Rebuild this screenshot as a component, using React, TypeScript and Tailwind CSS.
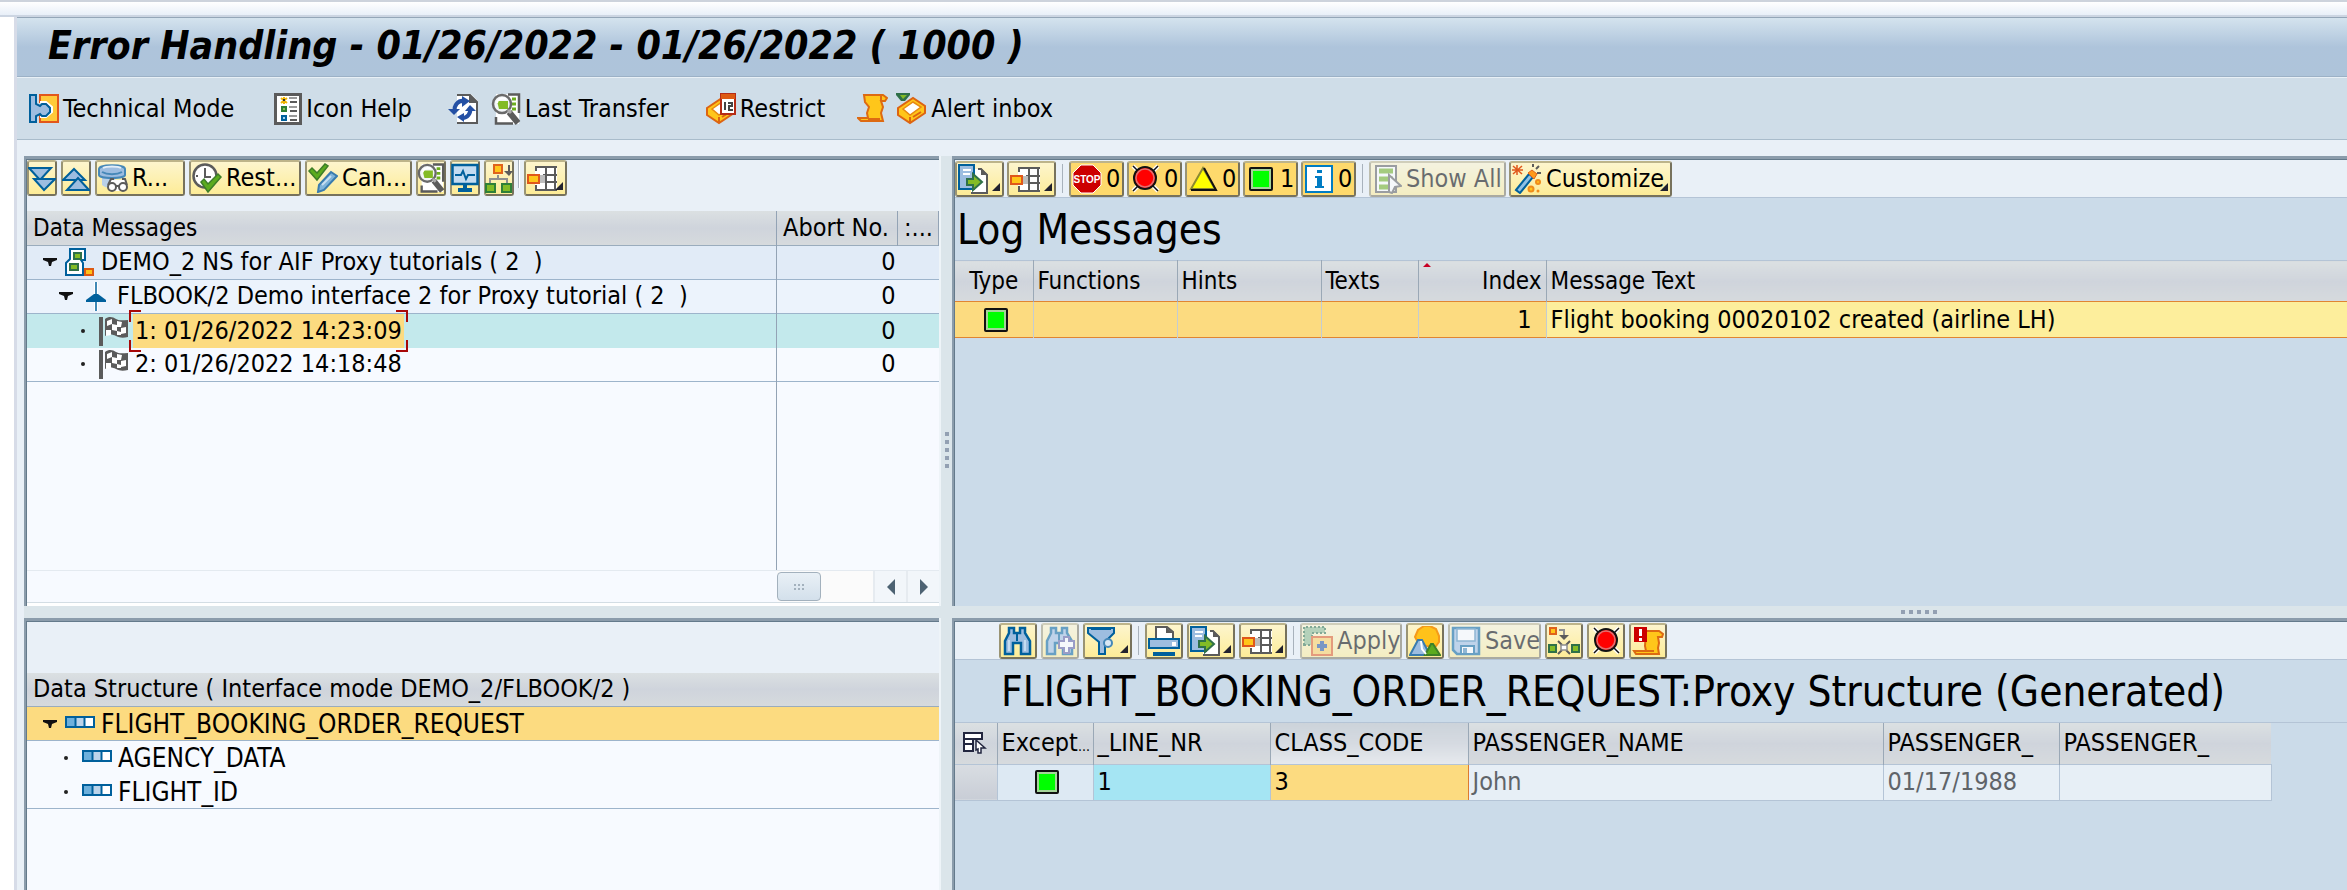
import React from 'react';
import type { ReactNode } from 'react';

/* ---------- icons ---------- */

type IconProps = { children: ReactNode; className?: string; box?: string };

function Icon({ children, className = 'size-[30px]', box = '0 0 30 30' }: IconProps) {
  return (
    <svg viewBox={box} className={`shrink-0 ${className}`} fill="none" aria-hidden="true">
      {children}
    </svg>
  );
}

const TechnicalIcon = () => (
  <Icon>
    <path d="M11 1h18v27H11v-6h5l5-4V12l-5-4h-5z" fill="#ffca3a" stroke="#e2571b" strokeWidth="2" />
    <path d="M11 8h6l6 5v5l-6 5h-6" stroke="#fff" strokeWidth="2" />
    <path d="M1 1h6v9l4 2 2-2h4l4 4v4l-4 4h-4l-2-2-4 2v6H1z" fill="#9dbde0" stroke="#00609c" strokeWidth="2" />
  </Icon>
);

const LegendIcon = () => (
  <Icon className="h-[32px] w-[28px]" box="0 0 28 32">
    <rect x="1.5" y="1.5" width="25" height="29" fill="#fff" stroke="#5b5b5b" strokeWidth="3" />
    <path d="M7 5l6 5M13 5l-6 5M10 4v7" stroke="#f0b400" strokeWidth="2" />
    <path d="M9 6h2v2H9z" fill="#333" />
    <path d="M8 14h4v4H8z" fill="#8cc152" stroke="#2f7d32" strokeWidth="2" />
    <path d="M8 23h4v4H8z" fill="#a6d2ef" stroke="#00609c" strokeWidth="2" />
    <path d="M15 5h8M15 14h8M15 23h8" stroke="#9a9a9a" strokeWidth="2" />
    <path d="M16 9h7M16 18h7M16 27h7" stroke="#5b5b5b" strokeWidth="2" />
  </Icon>
);

const RefreshIcon = () => (
  <Icon className="h-[32px] w-[31px]" box="0 0 31 32">
    <path d="M9 1h14l7 7v23H9z" fill="#fff" />
    <path d="M9 2h13l7 7v21H9" stroke="#5b5b5b" strokeWidth="2" />
    <path d="M21 1l9 9h-9z" fill="#5b5b5b" />
    <path d="M7 18a8 8 0 0 1 9-10" stroke="#2450a4" strokeWidth="4" />
    <path d="M14 3l8 5-8 6z" fill="#2450a4" />
    <path d="M0 16h12l-6 6z" fill="#2450a4" />
    <path d="M22 15a8 8 0 0 1-8 10" stroke="#2450a4" strokeWidth="4" />
    <path d="M17 18h11l-6-6z" fill="#2450a4" />
    <path d="M16 20v9l-7-5z" fill="#2450a4" />
  </Icon>
);

const SearchPageIcon = ({ className }: { className?: string }) => (
  <Icon className={className ?? 'h-[32px] w-[30px]'} box="0 0 30 32">
    <path d="M5 1h23v30H5z" fill="#fff" />
    <path d="M17 1.5h11V20M5 24v6.500h17" stroke="#5b5b5b" strokeWidth="2.500" />
    <path d="M21 6h4M21 11h4M21 16h4" stroke="#6cae1e" strokeWidth="3" />
    <circle cx="11" cy="11" r="9" fill="#f3f6f8" stroke="#6a6a6a" strokeWidth="2.500" />
    <path d="M6 8h11v8H8z" fill="#83bb26" />
    <path d="M6 10a6 5 0 0 1 9-4" stroke="#fff" strokeWidth="2" />
    <path d="M18 19l9 11" stroke="#5b5b5b" strokeWidth="6" />
    <path d="M17 17l3 3" stroke="#aaa" strokeWidth="3" />
  </Icon>
);

const Tray = () => (
  <>
    <path d="M2 15L17 5l12 8v7L14 30 2 22z" fill="#ffc61a" stroke="#dd6412" strokeWidth="2" />
    <path d="M7 16l10-7 8 5-11 8z" fill="#fff" stroke="#e88a12" strokeWidth="1.500" />
    <path d="M14 24v6M17 24l8-5" stroke="#dd6412" strokeWidth="2" />
  </>
);

const RestrictIcon = () => (
  <Icon className="h-[32px] w-[31px]" box="0 0 31 32">
    <Tray />
    <rect x="16" y="1" width="14" height="20" fill="#fff" stroke="#b52c16" strokeWidth="2" />
    <path d="M16 1h14v5H16z" fill="#dd5a12" />
    <path d="M20 9v8M23 10h4v3h-3v4h4" stroke="#444" strokeWidth="2" />
  </Icon>
);

const ScrollIcon = () => (
  <Icon className="h-[31px] w-[31px]" box="0 0 31 31">
    <path
      d="M7 2h19l4 3-2 3h-4l2 6-2 6 2 8H4l-3-3h10l-1-5 2-6-4-5z"
      fill="#ffc61a"
      stroke="#dd6a12"
      strokeWidth="2"
    />
    <path d="M11 26h12M24 3v5" stroke="#dd6a12" strokeWidth="2" />
  </Icon>
);

const AlertInboxIcon = () => (
  <Icon className="h-[32px] w-[31px]" box="0 0 31 32">
    <Tray />
    <path d="M0 0h14v2l-5 6H5L0 2z" fill="#2f7048" />
    <path d="M4 2h7L7 6z" fill="#83bb26" />
  </Icon>
);

const ExpandDownIcon = () => (
  <Icon className="h-[30px] w-[28px]" box="1 0 28 30">
    <path d="M2 5h22L13 17z" fill="#9dbde0" stroke="#00609c" strokeWidth="2" />
    <path d="M7 16h21L17 27z" fill="#9dbde0" stroke="#00609c" strokeWidth="2" />
  </Icon>
);

const CollapseUpIcon = () => (
  <Icon className="h-[30px] w-[28px]" box="1 0 28 30">
    <path d="M2 17h22L13 6z" fill="#9dbde0" stroke="#00609c" strokeWidth="2" />
    <path d="M6 27h22L17 15z" fill="#9dbde0" stroke="#00609c" strokeWidth="2" />
  </Icon>
);

const DatabaseReadIcon = () => (
  <Icon>
    <path d="M4 12v10c2 2 5 3 9 3h4V12z" fill="#b9d0e8" />
    <path d="M1 6C1 1 27 1 27 6v6c0 4-26 4-26 0z" fill="#9dbde0" stroke="#4688b8" strokeWidth="2" />
    <path d="M5 5c3-2 15-2 18 0" stroke="#e3eef8" strokeWidth="2" />
    <path d="M4 9c5 3 15 3 20 0" stroke="#4688b8" strokeWidth="2" />
    <path d="M12 17h16v11H11z" fill="#fff" />
    <circle cx="14" cy="24" r="4" fill="#fff" stroke="#5b5b5b" strokeWidth="2" />
    <circle cx="25" cy="24" r="4" fill="#fff" stroke="#5b5b5b" strokeWidth="2" />
    <path d="M10 22l3-6h3M29 22l-2-6h-3M18 23h3" stroke="#5b5b5b" strokeWidth="2" />
  </Icon>
);

const RestartIcon = () => (
  <Icon>
    <circle cx="13" cy="13" r="11.500" fill="#fff" stroke="#5b5b5b" strokeWidth="2.500" />
    <path d="M13 5v9h6" stroke="#5b5b5b" strokeWidth="2" />
    <path d="M4 13h2M13 23v-2" stroke="#5b5b5b" strokeWidth="2" />
    <path d="M9 19l3-3 4 5 10-10 3 3-13 15z" fill="#5cab1e" stroke="#3d7d28" strokeWidth="1.500" />
  </Icon>
);

const CancelIcon = () => (
  <Icon>
    <path d="M1 8l3-3 5 5L17 1l3 2L9 17z" fill="#5cab1e" stroke="#3d7d28" strokeWidth="1.500" />
    <path d="M11 22L23 9l6 4-13 14-6 2z" fill="#7fb4da" stroke="#3a7cae" strokeWidth="2" />
    <path d="M14 22l9-9" stroke="#c7def0" strokeWidth="2" />
  </Icon>
);

const MonitorIcon = () => (
  <Icon className="h-[30px] w-[28px]" box="1 0 28 30">
    <rect x="2.500" y="2" width="25" height="19" fill="#c4dcf1" stroke="#00609c" strokeWidth="2.500" />
    <path d="M5 12h6l2-4 3 8 2-4h7" stroke="#00609c" strokeWidth="2" />
    <path d="M13 22h4v3h5v4H8v-4h5z" fill="#00609c" />
  </Icon>
);

const HierarchyIcon = () => (
  <Icon className="h-[30px] w-[28px]" box="1 0 28 30">
    <rect x="10" y="2" width="8" height="8" fill="#ffc61a" stroke="#e0631b" strokeWidth="2" />
    <path d="M14 12v4M6 21v-5h17v5" stroke="#8f8f8f" strokeWidth="2" />
    <path d="M25 2v8" stroke="#5b5b5b" strokeWidth="2" />
    <path d="M20 8h9l-4 5z" fill="#5b5b5b" />
    <rect x="2" y="21" width="9" height="8" fill="#83bb26" stroke="#2f8038" strokeWidth="2" />
    <rect x="18" y="21" width="9" height="8" fill="#83bb26" stroke="#2f8038" strokeWidth="2" />
  </Icon>
);

const LayoutIcon = () => (
  <Icon className="h-[30px] w-[32px]" box="1 0 32 30">
    <path d="M9 3h22v24H9z" fill="#fff" />
    <path d="M9 4h22M17 12h14M17 19h14M9 27h22M20 3v25M29 3v25" stroke="#5b5b5b" strokeWidth="2" />
    <path d="M10 4v4M10 22v5" stroke="#5b5b5b" strokeWidth="2" />
    <path d="M13 12h6v8h-6z" fill="#bdbdbd" />
    <rect x="2" y="12" width="11" height="8" fill="#ffc61a" stroke="#e0571b" strokeWidth="2" />
  </Icon>
);

const ExportIcon = () => (
  <Icon className="h-[30px] w-[32px]" box="0 0 32 30">
    <path d="M14 5h8l7 7v17H13z" fill="#fff" />
    <path d="M20 5h3l6 6v18H13" stroke="#5b5b5b" strokeWidth="2" />
    <path d="M23 4v7h7z" fill="#5b5b5b" />
    <path d="M1 1h15v24H1z" fill="#9dbde0" stroke="#00609c" strokeWidth="2" />
    <path d="M5 6h8M5 10h7" stroke="#fff" strokeWidth="2" />
    <path d="M9 15h6v-5l9 8-9 8v-5H9z" fill="#83bb26" stroke="#2f7048" strokeWidth="2" />
  </Icon>
);

const StopIcon = () => (
  <Icon>
    <path d="M9 1h12l8 8v12l-8 8H9l-8-8V9z" fill="#cc0000" stroke="#fff" strokeWidth="1" />
    <text x="15" y="19" textAnchor="middle" fontSize="10" fontWeight="700" fontFamily="Liberation Sans, sans-serif" fill="#fff">
      STOP
    </text>
  </Icon>
);

const AlarmIcon = () => (
  <Icon>
    <path d="M3 2l25 25M28 2L3 27" stroke="#fff" strokeWidth="4" />
    <path d="M3 2l25 25M28 2L3 27" stroke="#111" strokeWidth="1.500" />
    <circle cx="15" cy="14" r="11" fill="#ff0000" stroke="#111" strokeWidth="2" />
    <circle cx="15" cy="14" r="9" stroke="#e07070" strokeWidth="1.500" />
  </Icon>
);

const WarningIcon = () => (
  <Icon>
    <path d="M15 4L27 25H3z" fill="#ffff00" stroke="#8c8a30" strokeWidth="2" />
    <path d="M3 26h25L16 4" stroke="#111" strokeWidth="2" />
  </Icon>
);

const GreenIcon = () => (
  <svg viewBox="0 0 24 24" className="size-6 shrink-0" fill="none" role="img" aria-label="Success">
    <rect x="1" y="1" width="22" height="22" rx="1" fill="#a5d59a" stroke="#111" strokeWidth="2" />
    <rect x="4" y="4" width="16" height="16" fill="#00ff00" />
  </svg>
);

const InfoIcon = () => (
  <Icon>
    <rect x="2" y="2" width="26" height="26" fill="#fff" stroke="#007cc3" strokeWidth="2" />
    <path d="M13 6h5v3h-5zM11 12h7v10h2v2h-9v-2h2v-8h-2z" fill="#007cc3" />
  </Icon>
);

const ShowAllIcon = () => (
  <Icon>
    <path d="M4 2h20v26H4z" fill="#fff" stroke="#5b5b5b" strokeWidth="2" />
    <path d="M7 7h14M7 15h14M7 23h14" stroke="#6cae1e" strokeWidth="5" />
    <path d="M17 11l12 11-6 1-3 6-3-1z" fill="#fff" stroke="#5b5b5b" strokeWidth="2" />
  </Icon>
);

const WandIcon = () => (
  <Icon>
    <path d="M4 26L17 10l4 3L8 29z" fill="#8fc0e4" stroke="#00609c" strokeWidth="2" />
    <path d="M16 9l4-3 5 4-3 5z" fill="#ff9a1a" stroke="#e0631b" strokeWidth="1" />
    <path d="M5 1v10M1 2l9 8M10 2L1 10M0 6h11" stroke="#e0571b" strokeWidth="1.500" />
    <path d="M21 0v3M27 2l-3 3M25 9h4" stroke="#5b5b5b" strokeWidth="2" />
    <circle cx="26" cy="18" r="2" fill="#ffc61a" stroke="#f08c1a" strokeWidth="2" />
    <circle cx="19" cy="25" r="2.500" fill="#ffc61a" stroke="#f08c1a" strokeWidth="2" />
    <circle cx="26" cy="27" r="1.500" fill="#f08c1a" />
  </Icon>
);

const Binoculars = () => (
  <>
    <path
      d="M6 2h5v5h6V2h5v5l5 8v13h-9V17h-8v11H2V15l4-8z"
      fill="#9dbde0"
      stroke="#00609c"
      strokeWidth="2.500"
    />
    <path d="M14 8v7" stroke="#00609c" strokeWidth="2" />
  </>
);

const FindIcon = () => (
  <Icon>
    <Binoculars />
    <path d="M6 14v11M22 14v11" stroke="#c4dcf1" strokeWidth="2" />
  </Icon>
);

const FindNextIcon = () => (
  <Icon>
    <Binoculars />
    <path d="M19 11h5v4h5v7h-5v5h-5v-5h-5v-7h5z" fill="#fff" stroke="#5b5ba0" strokeWidth="2" />
  </Icon>
);

const FilterIcon = () => (
  <Icon>
    <path d="M2 2h26v5l-9 9v12h-6V16L2 7z" fill="#9dbde0" stroke="#00609c" strokeWidth="2" />
    <path d="M5 3h20v1H5z" fill="#00609c" />
    <circle cx="22" cy="17" r="4" fill="#d9e8f4" stroke="#4688b8" strokeWidth="2" />
  </Icon>
);

const PrintIcon = () => (
  <Icon className="h-[30px] w-[32px]" box="0 0 32 30">
    <path d="M8 1h11l6 5v7H8z" fill="#fff" stroke="#5b5b5b" strokeWidth="2" />
    <path d="M18 1l7 6h-7z" fill="#5b5b5b" />
    <rect x="1" y="13" width="30" height="9" fill="#9dbde0" stroke="#00609c" strokeWidth="2" />
    <path d="M24 16h4v4h-4z" fill="#fff" />
    <path d="M5 26h22v4H5z" fill="#00609c" />
  </Icon>
);

const ApplyIcon = () => (
  <Icon>
    <path d="M1 19V1h21v6H9v12z" fill="#8ab88a" stroke="#2f7048" strokeWidth="2" strokeDasharray="2 2" />
    <rect x="9" y="11" width="20" height="18" fill="#ffce5a" stroke="#e0571b" strokeWidth="2" />
    <path d="M19 15v10M14 20h10" stroke="#1f4e9c" strokeWidth="4" />
  </Icon>
);

const MountainIcon = () => (
  <Icon className="h-[30px] w-[32px]" box="0 0 32 30">
    <path d="M6 11l3-7 6-4h6l6 3 3 7v6l-3 4H11z" fill="#ffc21a" stroke="#f59a1a" strokeWidth="2" />
    <path d="M1 29l8-15h4l8 15z" fill="#9dbde0" stroke="#3a7cae" strokeWidth="2" />
    <path d="M16 29l6-11h2l7 11z" fill="#5cab1e" stroke="#3d8028" strokeWidth="2" />
    <path d="M12 15l1 8 4 5" stroke="#fff" strokeWidth="2" />
  </Icon>
);

const SaveIcon = () => (
  <Icon>
    <path d="M2 2h26v26H6l-4-4z" fill="#9dbde0" stroke="#00609c" strokeWidth="2.500" />
    <path d="M6 3h18v12H6z" fill="#fff" stroke="#4688b8" strokeWidth="1.500" />
    <path d="M10 20h13v8H10z" fill="#fff" stroke="#00609c" strokeWidth="2" />
    <path d="M12 22h4v5h-4z" fill="#4688b8" />
  </Icon>
);

const MergeIcon = () => (
  <Icon className="h-[30px] w-[32px]" box="0 0 32 30">
    <rect x="2" y="2" width="6" height="6" fill="#ffc61a" stroke="#e0631b" strokeWidth="2" />
    <path d="M11 4h5v5" stroke="#8f8f8f" strokeWidth="2" />
    <path d="M11 9h10l-5 5z" fill="#5b5b5b" />
    <path d="M10 15l4 4M22 15l-4 4M10 28l4-4M22 28l-4-4" stroke="#5b5b5b" strokeWidth="2" />
    <rect x="1" y="19" width="7" height="7" fill="#83bb26" stroke="#2f7048" strokeWidth="2" />
    <rect x="24" y="19" width="7" height="7" fill="#83bb26" stroke="#2f7048" strokeWidth="2" />
    <path d="M13 19h6v5h-6z" fill="#fff" stroke="#8f8f8f" strokeWidth="1.500" />
  </Icon>
);

const AlertLogIcon = () => (
  <Icon className="h-[30px] w-[32px]" box="0 0 32 30">
    <path d="M14 5h13l4 3-1 3h-4l1 6-1 5 1 6H4l-2-3h12l-1-5z" fill="#ffc61a" stroke="#dd6a12" strokeWidth="2" />
    <path d="M10 25h12" stroke="#dd6a12" strokeWidth="2" />
    <path d="M2 1h13v15H2z" fill="#cc0000" />
    <path d="M8.500 3v7M8.500 12v3" stroke="#fff" strokeWidth="3" />
  </Icon>
);

const NamespaceIcon = () => (
  <Icon className="h-[29px] w-[30px]" box="0 0 30 29">
    <path d="M5 1h15v11h-4l2 3v12H1V15l4-4z" fill="#fff" stroke="#00609c" strokeWidth="2" />
    <path d="M9 5h7v6H9zM5 16h8v6H5z" fill="#83bb26" stroke="#2f7048" strokeWidth="2" />
    <path d="M20 21h8v6h-8z" fill="#ffc21a" stroke="#dd5a12" strokeWidth="2" />
  </Icon>
);

const InterfaceIcon = () => (
  <Icon className="h-[29px] w-[22px]" box="0 0 22 29">
    <path d="M11 0v29" stroke="#fff" strokeWidth="4" />
    <path d="M11 0v29" stroke="#00609c" strokeWidth="1.500" />
    <path d="M9 12h4l8 6v2H1v-2z" fill="#00609c" />
  </Icon>
);

const FlagIcon = () => (
  <Icon className="h-[30px] w-[30px]" box="0 0 30 30">
    <path d="M0 1h4v29H0z" fill="#5b5b5b" />
    <path d="M6 3c4-3 8-2 11 0s7 1 12 1v17c-5 1-8 1-12-1s-7-2-11 0z" fill="#5b5b5b" />
    <path d="M8 5l5-2v5l-5 2zM13 8l5 1v6l-5-1zM18 5l5 1-1 5h-4zM7 14h5v5l-5 1zM22 12l5-1v6l-5 1zM18 15l4 1v3h-4z" fill="#fff" />
  </Icon>
);

const StructureIcon = () => (
  <Icon className="h-[12px] w-[30px]" box="0 0 30 12">
    <rect x="1" y="1" width="28" height="10" fill="#fff" stroke="#00609c" strokeWidth="2" />
    <path d="M2 2h9v8H2z" fill="#6db0dc" />
    <path d="M11 2h8v8h-8z" fill="#bcd4ea" />
    <path d="M10.500 2v8M19.500 2v8" stroke="#00609c" strokeWidth="2" />
  </Icon>
);

const SelectAllIcon = () => (
  <Icon className="h-[22px] w-[24px]" box="0 0 24 22">
    <path d="M1 1h18v6H1zM1 7h9v5H1zM1 12h9v7H1z" fill="#fff" stroke="#22263f" strokeWidth="2" />
    <path d="M12 7h7" stroke="#22263f" strokeWidth="2" />
    <path d="M13 8l9 8h-4v5h-3v-4l-2 1z" fill="#fff" stroke="#22263f" strokeWidth="1.500" />
  </Icon>
);

const Twisty = () => (
  <Icon className="h-[8px] w-[14px]" box="0 0 14 8">
    <path d="M0 0h14v2l-5 2-1 4H6L5 4 0 2z" fill="#111" />
  </Icon>
);

/* ---------- toolbar parts ---------- */

type ToolProps = {
  width: string;
  label: string;
  children?: ReactNode;
  text?: string;
  menu?: boolean;
  pressed?: boolean;
  disabled?: boolean;
};

function Tool({ width, label, children, text, menu, pressed, disabled }: ToolProps) {
  const fill = pressed ? 'bg-[#fed96c]' : 'bg-linear-to-b from-[#fdf5cd] to-[#fdec97]';
  const spread = text || menu ? 'gap-1 pl-px' : 'justify-center';
  return (
    <button
      type="button"
      aria-label={label}
      aria-pressed={pressed}
      disabled={disabled}
      className={`relative flex h-9 shrink-0 items-center rounded-[3px] border-2 border-t-[#bdb48a] border-r-[#77725c] border-b-[#77725c] border-l-[#9a9474] whitespace-nowrap ${fill} ${spread} ${width} disabled:opacity-55`}
    >
      {children}
      {text && <span className="leading-8">{text}</span>}
      {menu && (
        <span className="absolute right-0.5 bottom-1 border-b-8 border-l-8 border-b-[#22222e] border-l-transparent" />
      )}
    </button>
  );
}

const Separator = () => <span className="h-7 w-0.5 shrink-0 border-l border-[#a8b2bc] bg-white" />;

type LinkToolProps = { children: ReactNode; text?: string };

function BarButton({ children, text }: LinkToolProps) {
  return (
    <button type="button" aria-label={text ?? 'Refresh'} className="flex shrink-0 items-center gap-1 whitespace-nowrap">
      {children}
      {text}
    </button>
  );
}

const HEAD = 'bg-linear-to-b from-[#dbe0e2] via-[#cfd4dc] to-[#d6dadd] font-normal';

function Panel({ children, tone }: { children: ReactNode; tone: string }) {
  return (
    <section className="min-w-0 border-t-3 border-l-2 border-[#8b9cab]">
      <div className={`flex h-full flex-col border-t border-l border-[#647a8b] ${tone}`}>{children}</div>
    </section>
  );
}

const Dots = ({ vertical }: { vertical?: boolean }) => (
  <div className={vertical ? 'flex flex-col gap-1' : 'flex gap-1'}>
    {[0, 1, 2, 3, 4].map((n) => (
      <span key={n} className="size-1 bg-[#93a0b2]" />
    ))}
  </div>
);

/* ---------- data messages ---------- */

function MessageTree() {
  const th = `${HEAD} border-r border-[#93a3b5] p-0 pl-1.5 whitespace-nowrap`;
  const cell = 'border-r border-[#93a3b5] p-0';
  const count = 'p-0 pr-0.5 text-right';
  return (
    <Panel tone="bg-[#f7faff]">
      <div className="flex h-[51px] items-start gap-1 bg-[#e9f0f7]">
        <Tool width="w-[30px]" label="Expand all"><ExpandDownIcon /></Tool>
        <Tool width="w-[30px]" label="Collapse all"><CollapseUpIcon /></Tool>
        <Tool width="w-[90px]" label="Read" text="R..."><DatabaseReadIcon /></Tool>
        <Tool width="w-[112px]" label="Restart" text="Rest..."><RestartIcon /></Tool>
        <Tool width="w-[107px]" label="Cancel" text="Can..."><CancelIcon /></Tool>
        <Tool width="w-[30px]" label="Details"><SearchPageIcon className="h-[30px] w-[28px]" /></Tool>
        <Tool width="w-[30px]" label="Monitor"><MonitorIcon /></Tool>
        <Tool width="w-[30px]" label="Hierarchy"><HierarchyIcon /></Tool>
        <Separator />
        <Tool width="w-[43px]" label="Layout" menu><LayoutIcon /></Tool>
      </div>
      <table className="w-full table-fixed border-collapse text-left">
        <colgroup>
          <col />
          <col className="w-[121px]" />
          <col className="w-[41px]" />
        </colgroup>
        <thead>
          <tr className="h-[34px] border-b border-[#9aacbd]">
            <th className={`${th} text-2xl`}>Data Messages</th>
            <th className={th}>Abort No.</th>
            <th className={th}>:...</th>
          </tr>
        </thead>
        <tbody>
          <tr className="h-[34px] border-b border-[#9db4cb] bg-[#e1ebf7]">
            <td className={cell}>
              <div className="flex items-center pl-4">
                <Twisty />
                <span className="pr-1.5 pl-2"><NamespaceIcon /></span>
                <span className="whitespace-pre">DEMO_2 NS for AIF Proxy tutorials ( 2  )</span>
              </div>
            </td>
            <td className={count}>0</td>
            <td />
          </tr>
          <tr className="h-[34px] border-b border-[#9db4cb] bg-[#ecf3fc]">
            <td className={cell}>
              <div className="flex items-center pl-8">
                <Twisty />
                <span className="pr-2.5 pl-3"><InterfaceIcon /></span>
                <span className="whitespace-pre">FLBOOK/2 Demo interface 2 for Proxy tutorial ( 2  )</span>
              </div>
            </td>
            <td className={count}>0</td>
            <td />
          </tr>
          <tr className="h-[34px] bg-[#c3e9ec]">
            <td className={cell}>
              <div className="flex items-center pl-[54px]">
                <span className="size-1 rounded-full bg-[#222]" />
                <span className="pl-3.5"><FlagIcon /></span>
                <span className="relative ml-1 bg-[#fcdb80] px-0.5 leading-[34px] whitespace-nowrap">
                  1: 01/26/2022 14:23:09
                  <i className="absolute -top-1 -left-1 size-3 border-t-2 border-l-2 border-[#a80808]" />
                  <i className="absolute -top-1 -right-1 size-3 border-t-2 border-r-2 border-[#a80808]" />
                  <i className="absolute -bottom-1 -left-1 size-3 border-b-2 border-l-2 border-[#a80808]" />
                  <i className="absolute -right-1 -bottom-1 size-3 border-r-2 border-b-2 border-[#a80808]" />
                </span>
              </div>
            </td>
            <td className={count}>0</td>
            <td />
          </tr>
          <tr className="h-[34px] border-b border-[#9db4cb]">
            <td className={cell}>
              <div className="flex items-center pl-[54px]">
                <span className="size-1 rounded-full bg-[#222]" />
                <span className="pl-3.5"><FlagIcon /></span>
                <span className="ml-1 px-0.5 whitespace-nowrap">2: 01/26/2022 14:18:48</span>
              </div>
            </td>
            <td className={count}>0</td>
            <td />
          </tr>
        </tbody>
      </table>
      <div className="flex flex-1">
        <div className="flex-1 border-r border-[#93a3b5]" />
        <div className="w-[162px]" />
      </div>
      <div className="flex h-8 justify-end border-t border-[#e4eaf0]">
        <div className="flex w-[162px] bg-[#fbfbfb]">
          <div className="my-px flex w-11 items-center justify-center rounded-sm border border-[#a3b1bd] bg-linear-to-b from-[#e9f0f6] to-[#d3e0eb]">
            <span className="h-1.5 w-2.5 border-y-2 border-dotted border-[#a3b1bd]" />
          </div>
          <div className="flex-1" />
          <button type="button" aria-label="Scroll left" className="flex w-[33px] items-center justify-center border-l-2 border-[#e6ebf0] bg-[#f2f6fa]">
            <Icon className="h-4 w-2" box="0 0 8 16"><path d="M8 0v16L0 8z" fill="#4d6272" /></Icon>
          </button>
          <button type="button" aria-label="Scroll right" className="flex w-[33px] items-center justify-center border-l-2 border-[#e6ebf0] bg-[#f2f6fa]">
            <Icon className="h-4 w-2" box="0 0 8 16"><path d="M0 0v16l8-8z" fill="#4d6272" /></Icon>
          </button>
        </div>
      </div>
      <div className="h-1 border-t border-[#d3dde4] bg-white" />
    </Panel>
  );
}

/* ---------- log ---------- */

function LogMessages() {
  const th = `${HEAD} border-r border-[#9aa8b6] p-0 px-1`;
  const td = 'border-r border-[#c4ccd2] p-0';
  return (
    <Panel tone="bg-[#cbdbe9]">
      <div className="flex h-[38px] items-center gap-[3px] border-b border-[#b4c4d6] bg-[#e9f0f7]">
        <Tool width="w-[49px]" label="Export" menu><ExportIcon /></Tool>
        <Tool width="w-[49px]" label="Layout" menu><LayoutIcon /></Tool>
        <span className="px-[3px]"><Separator /></span>
        <Tool width="w-[55px]" label="Terminations" text="0" pressed><StopIcon /></Tool>
        <Tool width="w-[55px]" label="Errors" text="0" pressed><AlarmIcon /></Tool>
        <Tool width="w-[55px]" label="Warnings" text="0" pressed><WarningIcon /></Tool>
        <Tool width="w-[55px]" label="Successes" text="1" pressed><span className="px-[3px]"><GreenIcon /></span></Tool>
        <Tool width="w-[55px]" label="Information" text="0" pressed><InfoIcon /></Tool>
        <span className="px-[3px]"><Separator /></span>
        <Tool width="w-[137px]" label="Show All" text="Show All" disabled><ShowAllIcon /></Tool>
        <Tool width="w-[163px]" label="Customize" text="Customize" menu><WandIcon /></Tool>
      </div>
      <h2 className="h-[62px] pt-0.5 pl-0.5 text-[42px] leading-[60px]">Log Messages</h2>
      <table className="w-full table-fixed border-collapse border-t border-[#b4c4d6] text-left">
        <colgroup>
          <col className="w-[78px]" />
          <col className="w-[144px]" />
          <col className="w-[144px]" />
          <col className="w-[97px]" />
          <col className="w-[128px]" />
          <col />
        </colgroup>
        <thead className="text-2xl">
          <tr className="h-[41px]">
            <th className={`${th} text-center`}>Type</th>
            <th className={th}>Functions</th>
            <th className={th}>Hints</th>
            <th className={th}>Texts</th>
            <th className={`${th} relative text-right`}>
              <i className="absolute top-0.5 left-1 border-x-4 border-b-4 border-x-transparent border-b-[#c80024]" />
              Index
            </th>
            <th className={`${HEAD} p-0 pl-1`}>Message Text</th>
          </tr>
        </thead>
        <tbody>
          <tr className="h-9 border-y border-[#e08532] bg-[#fcdb80]">
            <td className={td}><div className="flex justify-center pl-1"><GreenIcon /></div></td>
            <td className={td} />
            <td className={td} />
            <td className={td} />
            <td className={`${td} pr-3.5 text-right`}>1</td>
            <td className="bg-[#fdee9c] p-0 pl-1">Flight booking 00020102 created (airline LH)</td>
          </tr>
        </tbody>
      </table>
    </Panel>
  );
}

/* ---------- data structure ---------- */

function DataStructure() {
  return (
    <Panel tone="bg-[#f7faff]">
      <div className="h-[51px] bg-[#e9f0f7]" />
      <div className={`${HEAD} h-[34px] border-b border-[#9aacbd] pl-1.5`}>
        Data Structure ( Interface mode DEMO_2/FLBOOK/2 )
      </div>
      <ul className="text-[26px]">
        <li className="flex h-[34px] items-center border-b border-[#9db4cb] bg-[#fcdb80] pl-4">
          <Twisty />
          <span className="pr-1.5 pb-1 pl-2"><StructureIcon /></span>
          FLIGHT_BOOKING_ORDER_REQUEST
        </li>
        <li className="flex h-[34px] items-center pl-[37px]">
          <span className="size-1 rounded-full bg-[#222]" />
          <span className="pr-1.5 pb-1 pl-3.5"><StructureIcon /></span>
          AGENCY_DATA
        </li>
        <li className="flex h-[34px] items-center border-b border-[#9db4cb] pl-[37px]">
          <span className="size-1 rounded-full bg-[#222]" />
          <span className="pr-1.5 pb-1 pl-3.5"><StructureIcon /></span>
          FLIGHT_ID
        </li>
      </ul>
    </Panel>
  );
}

/* ---------- structure content ---------- */

function StructureContent() {
  const th = `${HEAD} border-r border-[#9aa8b6] p-0 pl-1 whitespace-nowrap`;
  const td = 'border-r border-b border-[#b4c4d6] p-0 pl-1';
  return (
    <Panel tone="bg-[#cbdbe9]">
      <div className="flex h-[38px] items-center gap-1 border-b border-[#b4c4d6] bg-[#e9f0f7] pl-11">
        <Tool width="w-[38px]" label="Find"><FindIcon /></Tool>
        <Tool width="w-[38px]" label="Find next" disabled><FindNextIcon /></Tool>
        <Tool width="w-[49px]" label="Filter" menu><FilterIcon /></Tool>
        <span className="px-0.5"><Separator /></span>
        <Tool width="w-[38px]" label="Print"><PrintIcon /></Tool>
        <Tool width="w-[48px]" label="Export" menu><ExportIcon /></Tool>
        <Tool width="w-[48px]" label="Layout" menu><LayoutIcon /></Tool>
        <span className="px-0.5"><Separator /></span>
        <Tool width="w-[102px]" label="Apply" text="Apply" disabled><ApplyIcon /></Tool>
        <Tool width="w-[38px]" label="Overview"><MountainIcon /></Tool>
        <Tool width="w-[93px]" label="Save" text="Save" disabled><SaveIcon /></Tool>
        <Tool width="w-[38px]" label="Merge"><MergeIcon /></Tool>
        <Tool width="w-[38px]" label="Errors"><AlarmIcon /></Tool>
        <Tool width="w-[38px]" label="Alert log"><AlertLogIcon /></Tool>
      </div>
      <h2 className="h-[62px] overflow-hidden pt-0.5 pl-[46px] text-[42px] leading-[60px] whitespace-nowrap">
        FLIGHT_BOOKING_ORDER_REQUEST:Proxy Structure (Generated)
      </h2>
      <div className="border-t border-[#b4c4d6]">
        <table className="w-[1316px] table-fixed border-collapse text-left">
          <colgroup>
            <col className="w-[42px]" />
            <col className="w-[96px]" />
            <col className="w-[177px]" />
            <col className="w-[198px]" />
            <col className="w-[415px]" />
            <col className="w-[176px]" />
            <col className="w-[212px]" />
          </colgroup>
          <thead>
            <tr className="h-[41px] border-b border-[#b4c4d6]">
              <th className={th} aria-label="Select rows"><div className="pl-1"><SelectAllIcon /></div></th>
              <th className={th}>Except<span className="text-sm">...</span></th>
              <th className={th}>_LINE_NR</th>
              <th className="border-r border-[#9aa8b6] bg-linear-to-b from-[#ccd3da] via-[#d5dae1] to-[#e6e9ed] p-0 pl-1 font-normal">
                CLASS_CODE
              </th>
              <th className={th}>PASSENGER_NAME</th>
              <th className={th}>PASSENGER_</th>
              <th className={`${HEAD} p-0 pl-1`}>PASSENGER_</th>
            </tr>
          </thead>
          <tbody>
            <tr className="h-9 bg-[#e7eff6] text-[#5f6469]">
              <td className={`${td} bg-linear-to-b from-[#d9dde2] to-[#c8cdd6]`} />
              <td className={`${td} bg-[#dde9f3]`}><div className="flex justify-center"><GreenIcon /></div></td>
              <td className={`${td} bg-[#a5e5f3] text-black`}>1</td>
              <td className="border-x border-b border-x-[#dd7a30] border-b-[#b4c4d6] bg-[#fcdb80] p-0 pl-1 text-black">3</td>
              <td className={td}>John</td>
              <td className={td}>01/17/1988</td>
              <td className={td} />
            </tr>
          </tbody>
        </table>
      </div>
    </Panel>
  );
}

/* ---------- page ---------- */

export default function App() {
  return (
    <div className="flex min-h-screen flex-col border-t-2 border-[#cdd3dc] bg-white font-['DejaVu_Sans_Condensed','DejaVu_Sans',sans-serif] text-[25px] leading-8 text-black">
      <div className="h-[15px] border-b-2 border-[#ccd5e2] bg-linear-to-b from-white to-[#e8eff8]" />
      <div className="ml-3.5 flex flex-1 flex-col border-l-3 border-[#d7dce8] bg-[#e9f0f7]">
        <header>
          <div className="flex h-[60px] items-center border-y border-t-[#94a6b8] border-b-[#9cb1c6] bg-linear-to-b from-[#d4e3ee] via-[#aec4db] via-50% to-[#aec4da] pb-1 pl-[31px]">
            <h1 className="text-[39px] leading-none font-bold whitespace-nowrap italic">
              Error Handling - 01/26/2022 - 01/26/2022 ( 1000 )
            </h1>
          </div>
          <nav className="flex h-[63px] items-center border-t border-b border-t-[#e8f0f6] border-b-[#a9bccb] bg-[#cfdde8] pl-3">
            <BarButton text="Technical Mode"><TechnicalIcon /></BarButton>
            <div className="w-10" />
            <BarButton text="Icon Help"><LegendIcon /></BarButton>
            <div className="w-9" />
            <BarButton><RefreshIcon /></BarButton>
            <div className="w-3" />
            <BarButton text="Last Transfer"><SearchPageIcon /></BarButton>
            <div className="w-9" />
            <BarButton text="Restrict"><RestrictIcon /></BarButton>
            <div className="w-8" />
            <BarButton text="Alert inbox">
              <ScrollIcon />
              <span className="pl-1"><AlertInboxIcon /></span>
            </BarButton>
          </nav>
        </header>

        <main className="flex flex-1 flex-col pt-4 pl-[7px]">
          <div className="grid min-h-[450px] grid-cols-[minmax(0,915fr)_13px_minmax(0,1395fr)]">
            <MessageTree />
            <div className="flex flex-col items-center border-l-2 border-[#eef4f8] bg-[#dbe5ea]">
              <div className="flex-8" />
              <Dots vertical />
              <div className="flex-4" />
            </div>
            <LogMessages />
          </div>
          <div className="flex h-3 items-center bg-[#dbe5ea]">
            <div className="w-[80.8%]" />
            <Dots />
          </div>
          <div className="grid flex-1 grid-cols-[minmax(0,915fr)_13px_minmax(0,1395fr)]">
            <DataStructure />
            <div className="border-l-2 border-[#eef4f8] bg-[#dbe5ea]" />
            <StructureContent />
          </div>
        </main>
      </div>
    </div>
  );
}
